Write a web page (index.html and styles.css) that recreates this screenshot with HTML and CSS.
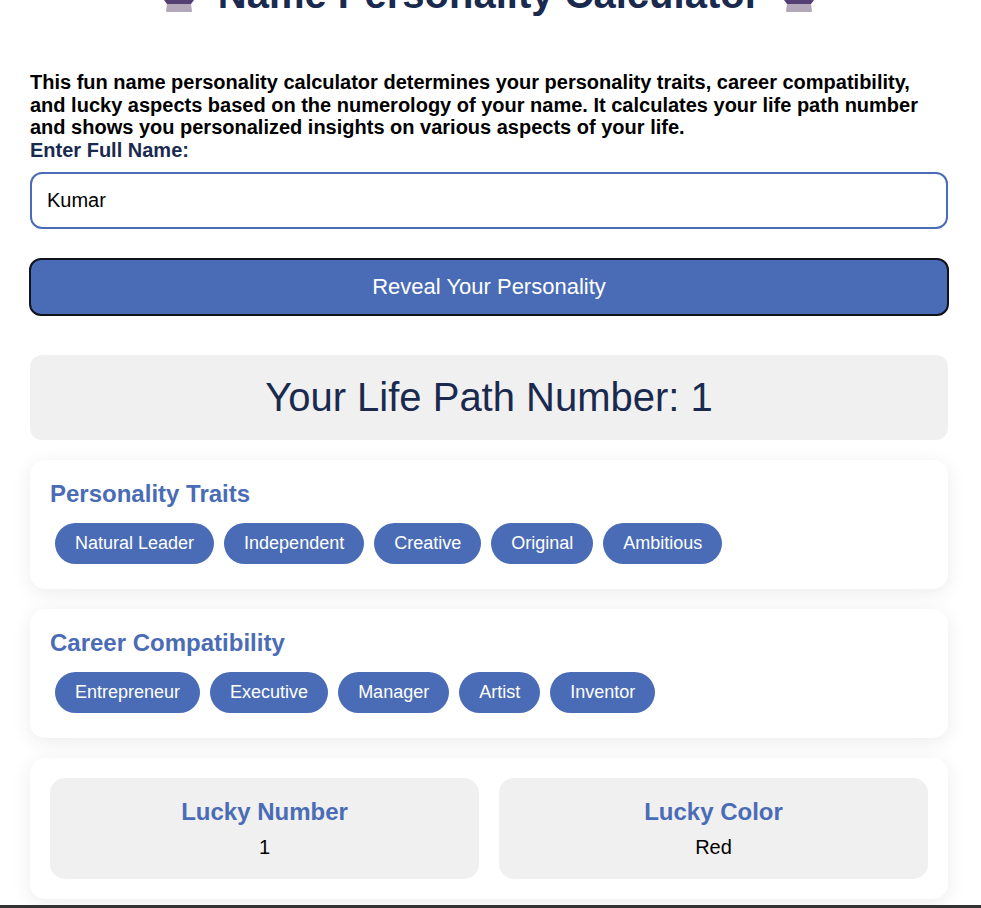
FILE: index.html
```html
<!DOCTYPE html>
<html lang="en">
<head>
<meta charset="utf-8">
<title>Name Personality Calculator</title>
<link rel="stylesheet" href="styles.css">
</head>
<body>
<main class="page">
  <h1 class="title">
    <svg class="orb" viewBox="0 0 30 12" aria-hidden="true"><path d="M0 0h30l-3 4H3z" fill="#553f72"/><path d="M3 4h24l1 7a1 1 0 0 1-1 1H3a1 1 0 0 1-1-1z" fill="#b3a7ba"/></svg>
    <span>Name Personality Calculator</span>
    <svg class="orb" viewBox="0 0 30 12" aria-hidden="true"><path d="M0 0h30l-3 4H3z" fill="#553f72"/><path d="M3 4h24l1 7a1 1 0 0 1-1 1H3a1 1 0 0 1-1-1z" fill="#b3a7ba"/></svg>
  </h1>
  <p class="intro">This fun name personality calculator determines your personality traits, career compatibility, and lucky aspects based on the numerology of your name. It calculates your life path number and shows you personalized insights on various aspects of your life.</p>
  <label class="label" for="name">Enter Full Name:</label>
  <input class="input" id="name" type="text" value="Kumar">
  <button class="reveal" type="button">Reveal Your Personality</button>
  <section class="life-path"><h2>Your Life Path Number: 1</h2></section>
  <section class="card">
    <h3 class="card-title">Personality Traits</h3>
    <div class="tags">
      <span class="tag">Natural Leader</span><span class="tag">Independent</span><span class="tag">Creative</span><span class="tag">Original</span><span class="tag">Ambitious</span>
    </div>
  </section>
  <section class="card">
    <h3 class="card-title">Career Compatibility</h3>
    <div class="tags">
      <span class="tag">Entrepreneur</span><span class="tag">Executive</span><span class="tag">Manager</span><span class="tag">Artist</span><span class="tag">Inventor</span>
    </div>
  </section>
  <section class="card lucky">
    <div class="lucky-box"><h3 class="card-title">Lucky Number</h3><div>1</div></div>
    <div class="lucky-box"><h3 class="card-title">Lucky Color</h3><div>Red</div></div>
  </section>
</main>
<div class="edge"></div>
</body>
</html>
```
FILE: styles.css
```css
* { box-sizing: border-box; }
html, body { margin: 0; height: 908px; overflow: hidden; background: #fff; }
body { font-family: "Liberation Sans", Arial, sans-serif; font-size: 20px; color: #000; position: relative; }
.page { padding: 0 33px 0 30px; margin-top: -29px; }
.title { margin: 0 0 54px; height: 46px; display: flex; justify-content: center; align-items: flex-end; gap: 24px; font-size: 40px; line-height: 46px; font-weight: 700; color: #1a2a4f; }
.orb { width: 30px; height: 12px; flex: none; margin-bottom: 5px; }
.intro { margin: 0; font-size: 20px; font-weight: 700; line-height: 22.5px; }
.label { display: block; font-size: 20px; font-weight: 700; line-height: 23px; color: #1a2a4f; margin-bottom: 10px; }
.input { display: block; width: 100%; height: 57px; border: 2px solid #4a6cb6; border-radius: 12px; padding: 0 15px; font: 20px "Liberation Sans", Arial, sans-serif; color: #000; background: #fff; outline: none; margin-bottom: 29px; }
.reveal { display: block; width: calc(100% + 2px); margin: 0 -1px 39px; height: 58px; border: 2px solid #10131c; border-radius: 12px; background: #4a6cb6; color: #fff; font: 22px "Liberation Sans", Arial, sans-serif; }
.life-path { height: 85px; background: #f0f0f0; border-radius: 12px; display: flex; align-items: center; justify-content: center; margin-bottom: 20px; }
.life-path h2 { margin: 0; font-size: 40px; font-weight: 400; color: #1a2a4f; }
.card { background: #fff; border-radius: 15px; padding: 20px; margin-bottom: 20px; box-shadow: 0 4px 20px rgba(0,0,0,.08); }
.card-title { margin: 0; font-size: 24px; line-height: 28px; font-weight: 700; color: #4a6cb6; }
.tags { display: flex; gap: 10px; padding: 15px 5px 5px; }
.tag { height: 41px; line-height: 40px; padding: 0 20px; border-radius: 21px; background: #4a6cb6; color: #fff; font-size: 18px; }
.lucky { display: grid; grid-template-columns: 1fr 1fr; gap: 20px; }
.lucky-box { height: 101px; background: #f0f0f0; border-radius: 15px; text-align: center; padding-top: 20px; }
.lucky-box div { margin-top: 10px; line-height: 23px; }
.edge { position: absolute; left: 0; right: 0; bottom: 0; height: 3px; background: #333; }
```
